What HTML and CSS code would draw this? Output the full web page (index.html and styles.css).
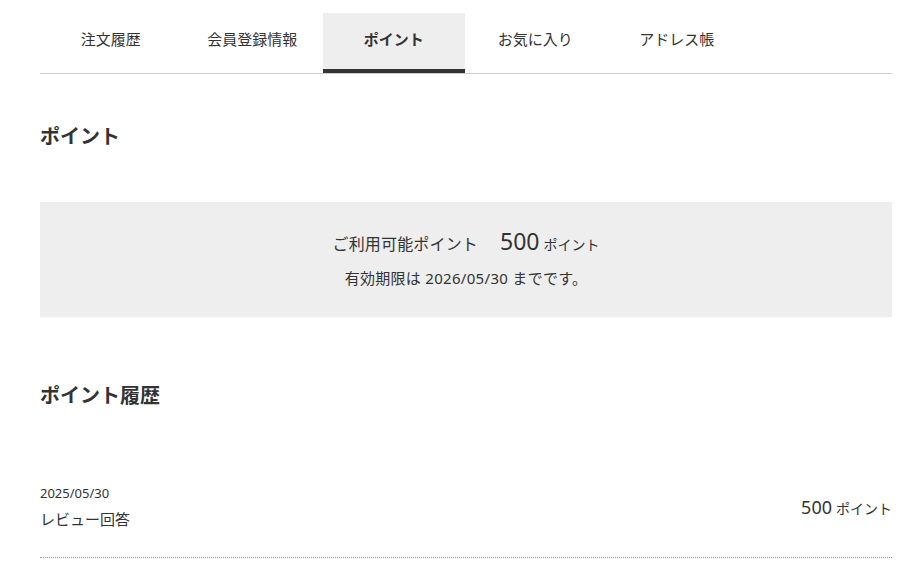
FILE: index.html
```html
<!DOCTYPE html>
<html lang="ja">
<head>
<meta charset="utf-8">
<title>ポイント</title>
<link rel="stylesheet" href="styles.css">
</head>
<body>
<div class="page">
  <nav class="tabs">
    <a class="tab">注文履歴</a>
    <a class="tab">会員登録情報</a>
    <a class="tab is-active">ポイント</a>
    <a class="tab">お気に入り</a>
    <a class="tab">アドレス帳</a>
  </nav>

  <h2 class="heading heading--first">ポイント</h2>

  <section class="point-box">
    <p class="point-box__main">
      <span class="point-box__label">ご利用可能ポイント</span>
      <span class="point-box__value">500</span>
      <span class="point-box__unit">ポイント</span>
    </p>
    <p class="point-box__limit">有効期限は 2026/05/30 までです。</p>
  </section>

  <h2 class="heading heading--history">ポイント履歴</h2>

  <ul class="history">
    <li class="history__row">
      <div class="history__info">
        <div class="history__date">2025/05/30</div>
        <div class="history__name">レビュー回答</div>
      </div>
      <div class="history__points"><span class="history__num">500</span> <span class="history__unit">ポイント</span></div>
    </li>
  </ul>
</div>
</body>
</html>
```

FILE: styles.css
```css
* { box-sizing: border-box; }

html, body {
  margin: 0;
  padding: 0;
  background: #fff;
}

body {
  font-family: "Noto Sans", "Noto Sans CJK JP", sans-serif;
  color: #333;
}

.page {
  padding: 13px 28px 0 40px;
}

.tabs {
  display: flex;
  border-bottom: 1px solid #ccc;
}

.tab {
  width: 141.5px;
  height: 60px;
  display: flex;
  align-items: center;
  justify-content: center;
  padding-bottom: 6px;
  font-size: 15px;
  color: #333;
  border-bottom: 4px solid transparent;
}

.tab.is-active {
  background: #eeeeee;
  border-bottom-color: #333;
  font-weight: bold;
}

.heading {
  margin: 0;
  font-size: 20px;
  line-height: 30px;
  font-weight: bold;
}

.heading--first {
  margin-top: 48px;
  margin-bottom: 50px;
}

.point-box {
  background: #eeeeee;
  padding: 24px 0 26px;
  text-align: center;
}

.point-box p {
  margin: 0;
}

.point-box__main {
  line-height: 30px;
  display: flex;
  justify-content: center;
  align-items: baseline;
}

.point-box__label {
  font-size: 16px;
  letter-spacing: 0.01em;
}

.point-box__value {
  font-size: 23px;
  margin-left: 22px;
}

.point-box__unit {
  font-size: 14px;
  margin-left: 4px;
}

.point-box__limit {
  margin-top: 6px !important;
  font-size: 15px;
  line-height: 25px;
  letter-spacing: 0.02em;
}

.heading--history {
  margin-top: 64px;
}

.history {
  list-style: none;
  margin: 0;
  padding: 0;
}

.history__row {
  display: flex;
  justify-content: space-between;
  align-items: center;
  padding: 72px 0 26px;
  border-bottom: 1px dotted #999;
}

.history__date {
  font-size: 13px;
  line-height: 20px;
}

.history__name {
  margin-top: 4px;
  font-size: 15px;
  line-height: 24px;
}

.history__points {
  display: flex;
  align-items: baseline;
  gap: 4px;
}

.history__num {
  font-size: 18px;
}

.history__unit {
  font-size: 14px;
}
```
